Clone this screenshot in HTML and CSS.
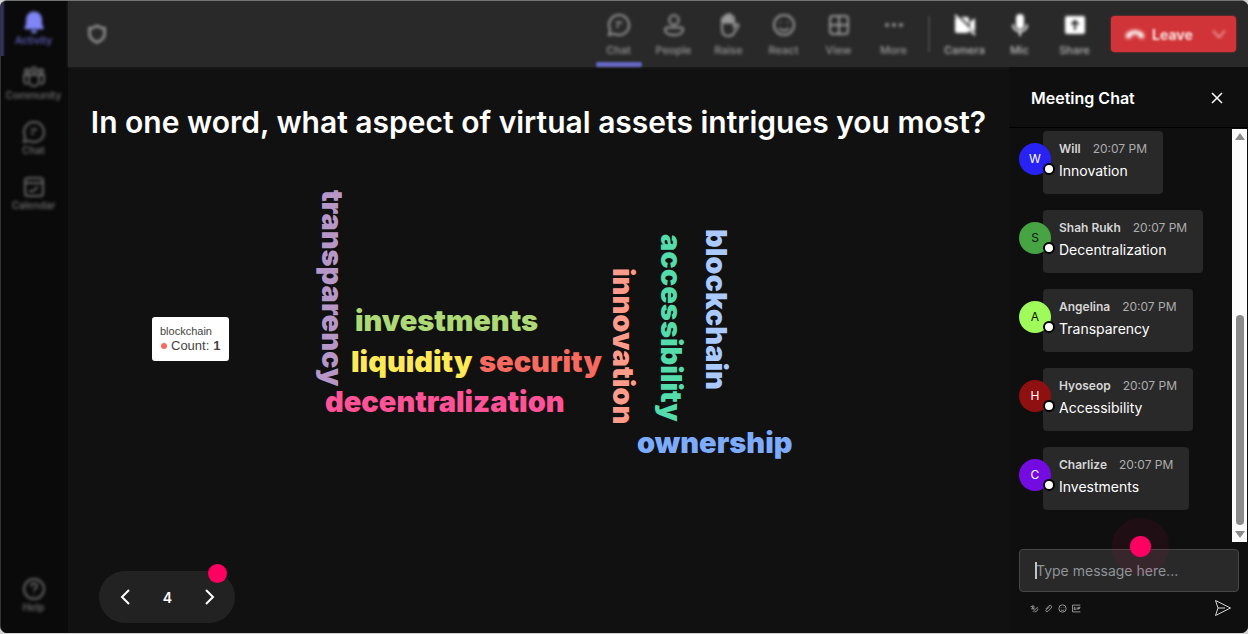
FILE: index.html
```html
<!DOCTYPE html>
<html lang="en">
<head>
<meta charset="utf-8">
<title>Meeting</title>
<link rel="stylesheet" href="styles.css">
</head>
<body>
<div class="app">
  <nav class="rail" aria-label="Main">
    <button class="rail-item active"><svg viewBox="0 0 24 24"><path class="solid" d="M12 1.500a8 8 0 0 0-8 8v4.500l-1.600 4A1 1 0 0 0 3.400 19.300h17.200a1 1 0 0 0 1-1.300L20 14V9.500a8 8 0 0 0-8-8zM9 20.500a3 3 0 0 0 6 0z"/></svg><span>Activity</span></button>
    <button class="rail-item"><svg viewBox="0 0 24 24"><circle cx="5" cy="6" r="2"/><circle cx="12" cy="5" r="2.500"/><circle cx="19" cy="6" r="2"/><path d="M7 10h10v6a5 5 0 0 1-10 0zM7 10H2v5c0 3 2 4 4 4M17 10h5v5c0 3-2 4-4 4"/></svg><span>Community</span></button>
    <button class="rail-item"><svg viewBox="0 0 24 24"><path d="M12 2a10 10 0 1 1-4.700 18.800L2 22l1.200-5.300A10 10 0 0 1 12 2zM9 9.500h6M9 13.500h3"/></svg><span>Chat</span></button>
    <button class="rail-item"><svg viewBox="0 0 24 24"><rect x="3" y="3" width="18" height="18" rx="3"/><path d="M3 8h18M7 16h4l5-4"/></svg><span>Calendar</span></button>
    <button class="rail-item help"><svg viewBox="0 0 24 24"><circle cx="12" cy="12" r="10"/><path d="M9 9.500c0-4 6-4 6-.5 0 2.500-3 2.500-3 5M12 17v1"/></svg><span>Help</span></button>
  </nav>

  <div class="workspace">
    <header class="topbar">
      <svg class="shield" viewBox="0 0 24 24"><path d="M12 2c3 2 5 3 9 3v7c0 5-4 8-9 10-5-2-9-5-9-10V5c4 0 6-1 9-3z"/></svg>
      <div class="tools">
        <button class="tool current"><svg viewBox="0 0 24 24"><path d="M12 2a10 10 0 1 1-4.700 18.800L2 22l1.200-5.300A10 10 0 0 1 12 2zM9 9.500h6M9 13.500h3"/></svg><span>Chat</span></button>
        <button class="tool"><svg viewBox="0 0 24 24"><circle cx="12" cy="7" r="4.700"/><path d="M5 14.500h14a2 2 0 0 1 2 2c0 3.500-4 5.500-9 5.500s-9-2-9-5.500a2 2 0 0 1 2-2z"/></svg><span>People</span></button>
        <button class="tool"><svg viewBox="0 0 24 24"><path d="M5 12V6a1.500 1.500 0 0 1 3 0v5V3.500a1.500 1.500 0 0 1 3 0V11 2.500a1.500 1.500 0 0 1 3 0V11 5a1.500 1.500 0 0 1 3 0v9l2-2.500c1-1.200 3 0 2.400 1.500L17 20c-1 2-3 3-5.500 3C7 23 5 20 5 16z"/><path class="solid" d="M5 6h12v4H5zM8 2h6v5H8z"/></svg><span>Raise</span></button>
        <button class="tool"><svg viewBox="0 0 24 24"><circle cx="12" cy="12" r="10"/><path d="M8.500 9v1M15.500 9v1M7 15c2.500 3.300 7.500 3.300 10 0"/></svg><span>React</span></button>
        <button class="tool"><svg viewBox="0 0 24 24"><rect x="3" y="3" width="18" height="18" rx="3"/><path d="M12 3v18M3 12h18"/></svg><span>View</span></button>
        <button class="tool"><svg viewBox="0 0 24 24"><circle class="solid" cx="5" cy="12" r="2"/><circle class="solid" cx="12" cy="12" r="2"/><circle class="solid" cx="19" cy="12" r="2"/></svg><span>More</span></button>
        <span class="divider"></span>
        <button class="tool bright"><svg viewBox="0 0 24 24"><path class="solid" d="M5 4l11 11v3a2 2 0 0 1-2 2H4a2 2 0 0 1-2-2V6zM8 4h6a2 2 0 0 1 2 2v6zM17 9l5-4v14l-5-4z"/><path d="M2 2l20 20"/></svg><span>Camera</span></button>
        <button class="tool bright"><svg viewBox="0 0 24 24"><rect class="solid" x="8" y="1" width="8" height="15" rx="4"/><path d="M5 11.500c0 9 14 9 14 0M12 18.500V23"/></svg><span>Mic</span></button>
        <button class="tool bright"><svg viewBox="0 0 24 24"><rect class="solid" x="2" y="3" width="20" height="18" rx="2"/><path class="cut" d="M12 17V8M8.500 11.500L12 8l3.500 3.500"/></svg><span>Share</span></button>
      </div>
      <div class="leave">
        <button class="leave-main"><svg viewBox="0 0 24 24"><path class="solid" d="M1 15c0-10 22-10 22 0 0 3-2 2.500-6 1.500-1-.3-1-1-1-3.500-3-1-5-1-8 0 0 2.500 0 3.200-1 3.500-4 1-6 1.500-6-1.500z"/></svg>Leave</button>
        <button class="leave-more" aria-label="Leave options"><svg viewBox="0 0 24 24"><path d="M3 7l9 10 9-10"/></svg></button>
      </div>
    </header>

    <div class="content">
      <main class="stage">
        <h1>In one word, what aspect of virtual assets intrigues you most?</h1>
        <div class="cloud">
          <span class="word down transparency">transparency</span>
          <span class="word investments">investments</span>
          <span class="word liquidity">liquidity</span>
          <span class="word security">security</span>
          <span class="word decentralization">decentralization</span>
          <span class="word down innovation">innovation</span>
          <span class="word down accessibility">accessibility</span>
          <span class="word down blockchain">blockchain</span>
          <span class="word ownership">ownership</span>
          <div class="tooltip"><div>blockchain</div><div class="count"><i></i>Count: <b>1</b></div></div>
        </div>
        <div class="pager">
          <button aria-label="Previous"><svg viewBox="0 0 12 18"><path d="M10 2L3 9l7 7"/></svg></button>
          <span>4</span>
          <button aria-label="Next"><svg viewBox="0 0 12 18"><path d="M2 2l7 7-7 7"/></svg></button>
          <i class="hotspot"></i>
        </div>
      </main>

      <aside class="chat">
        <div class="chat-head">
          <h2>Meeting Chat</h2>
          <button aria-label="Close"><svg viewBox="0 0 12 12"><path d="M1 1l10 10M11 1L1 11"/></svg></button>
        </div>
        <div class="chat-body">
          <ul class="messages">
            <li><span class="avatar will">W</span><div class="bubble"><p class="meta"><b>Will</b><time>20:07 PM</time></p><p>Innovation</p></div></li>
            <li><span class="avatar shah">S</span><div class="bubble"><p class="meta"><b>Shah Rukh</b><time>20:07 PM</time></p><p>Decentralization</p></div></li>
            <li><span class="avatar angelina">A</span><div class="bubble"><p class="meta"><b>Angelina</b><time>20:07 PM</time></p><p>Transparency</p></div></li>
            <li><span class="avatar hyoseop">H</span><div class="bubble"><p class="meta"><b>Hyoseop</b><time>20:07 PM</time></p><p>Accessibility</p></div></li>
            <li><span class="avatar charlize">C</span><div class="bubble"><p class="meta"><b>Charlize</b><time>20:07 PM</time></p><p>Investments</p></div></li>
          </ul>
          <div class="scrollbar" aria-hidden="true"><span class="up"></span><span class="track"></span><span class="thumb"></span><span class="dn"></span></div>
        </div>
        <form class="composer">
          <div class="field">
            <input type="text" aria-label="Message" placeholder="Type message here...">
            <i class="caret"></i>
            <i class="pulse"></i>
          </div>
          <div class="actions">
            <button type="button" aria-label="Format"><svg viewBox="0 0 16 16"><path d="M1 5l5-2-3 6 4-1M5 14l9-9M8 14c4 0 6-3 6-6M7 4v6"/></svg></button>
            <button type="button" aria-label="Attach"><svg viewBox="0 0 16 16"><path d="M3 9l6-6c3-2 6 1 4 4l-6 6c-3 2-5-1-3-3l6-5"/></svg></button>
            <button type="button" aria-label="Emoji"><svg viewBox="0 0 16 16"><circle cx="8" cy="8" r="6.500"/><path d="M5.500 6v1M10.500 6v1M5 10c1.500 2 4.500 2 6 0"/></svg></button>
            <button type="button" aria-label="GIF"><svg viewBox="0 0 16 16"><path d="M15 2H1v12h14M6 6H4v4h2V8M9 6v4M11 10V6h4M11 8h3"/></svg></button>
            <button type="button" class="send" aria-label="Send"><svg viewBox="0 0 18 18"><path d="M1.500 1.500L16.500 9l-15 7.500L4 9zM4 9h7"/></svg></button>
          </div>
        </form>
      </aside>
    </div>
  </div>
</div>
</body>
</html>
```
FILE: styles.css
```css
*, *::before, *::after { box-sizing: border-box; }
html, body { height: 100%; }
body {
  margin: 0;
  background: #d4d4d4;
  color: #fff;
  font-family: Inter, "Liberation Sans", sans-serif;
}
h1, h2, p, ul { margin: 0; padding: 0; }
ul { list-style: none; }
button { border: 0; padding: 0; background: none; color: inherit; font: inherit; }
svg { display: block; fill: none; stroke: currentColor; stroke-width: 2; }
.solid { fill: currentColor; stroke: none; }

.app {
  --soft: blur(1px) blur(1px);
  display: flex;
  height: calc(100vh - 1px);
  border-top: 1px solid #737373;
  border-left: 1px solid #333;
  border-radius: 7px;
  background: #111;
  overflow: hidden;
}

.rail {
  flex: 0 0 67px;
  display: flex;
  flex-direction: column;
  padding-bottom: 13px;
  background: #0a0a0a;
}
.rail-item {
  display: flex;
  flex-direction: column;
  align-items: center;
  height: 55px;
  padding: 9px 2px 0 0;
  color: #666;
  font-size: 10px;
  line-height: 12px;
  font-weight: 600;
}
.rail-item svg { width: 24px; height: 24px; }
.rail-item svg, .rail-item span { filter: var(--soft); }
.rail-item.active { color: #5a5ab0; box-shadow: inset 4px 0 2px -1px #333366; }
.rail-item.active svg { color: #7f85f5; }
.rail-item.help { margin-top: auto; height: 43px; padding-top: 0; }

.workspace { flex: 1; min-width: 0; display: flex; flex-direction: column; }
.topbar {
  flex: 0 0 66px;
  display: flex;
  align-items: center;
  padding: 0 12px 0 19px;
  background: #292929;
  box-shadow: 0 0 3px #292929;
}
.topbar svg, .topbar .tool span { filter: var(--soft); }
.shield { width: 20px; height: 20px; color: #999; stroke-width: 3; }
.tools { display: flex; align-self: stretch; margin-left: auto; }
.tool {
  position: relative;
  display: flex;
  flex-direction: column;
  align-items: center;
  gap: 6px;
  width: 55px;
  padding-top: 12px;
  color: #999;
  font-size: 11px;
  line-height: 14px;
  font-weight: 500;
}
.tool svg { width: 24px; height: 24px; }
.tool.bright { color: #bbb; }
.tool.bright svg { color: #fff; }
.tool .cut { stroke: #292929; }
.current::after {
  content: "";
  position: absolute;
  left: 5px;
  right: 4px;
  bottom: 0;
  height: 5px;
  border-radius: 2px;
  background: #6468c4;
  filter: blur(1px);
}
.divider { width: 2px; margin: 15px 7px; background: #444; filter: blur(1px); }
.leave {
  display: flex;
  align-items: center;
  height: 36px;
  margin-left: 9px;
  border-radius: 4px;
  background: #d13438;
  box-shadow: 0 0 2px #d13438;
}
.leave-main {
  display: flex;
  align-items: center;
  gap: 7px;
  width: 91px;
  padding-left: 14px;
  font-size: 14px;
  font-weight: 700;
  color: #fbe3e3;
  filter: blur(1px);
}
.leave-main svg { width: 20px; height: 20px; color: #fff; }
.leave-more { width: 34px; padding-left: 9px; color: #fbd0d1; }
.leave-more svg { width: 16px; height: 16px; }

.content { flex: 1; min-height: 0; display: flex; }
.stage { flex: 1; min-width: 0; display: flex; flex-direction: column; }
h1 {
  padding-top: 37px;
  text-align: center;
  font-size: 30px;
  line-height: 36px;
  font-weight: 600;
}
.cloud { position: relative; flex: 1; }
.word {
  position: absolute;
  font-family: "Arial Black", Inter, sans-serif;
  font-size: 29px;
  line-height: 34px;
  font-weight: 900;
  white-space: nowrap;
}
.down { writing-mode: vertical-rl; }
.transparency { left: 247px; top: 50px; color: #b797c7; }
.investments { left: 287px; top: 164px; color: #add976; }
.liquidity { left: 283px; top: 205px; color: #ffe957; }
.security { left: 411px; top: 205px; color: #f66a60; }
.decentralization { left: 257px; top: 245px; color: #ff5297; }
.innovation { left: 538px; top: 128px; color: #ff9b8a; }
.accessibility { left: 586px; top: 94px; color: #54dcab; }
.blockchain { left: 631px; top: 89px; color: #a9c9ff; }
.ownership { left: 569px; top: 286px; color: #7dacff; }
.tooltip {
  position: absolute;
  left: 84px;
  top: 177px;
  width: 77px;
  padding: 7px 8px;
  border-radius: 3px;
  background: #fff;
  color: #444;
  font-family: "Liberation Sans", Arial, sans-serif;
  font-size: 11px;
  line-height: 14px;
  white-space: nowrap;
}
.count { display: flex; align-items: center; gap: 4px; font-size: 13px; line-height: 16px; }
.count i { width: 6px; height: 6px; margin-left: 1px; border-radius: 50%; background: #f66a60; }
.pager {
  position: relative;
  display: flex;
  align-items: center;
  justify-content: space-between;
  align-self: flex-start;
  width: 136px;
  height: 52px;
  margin: 0 0 10px 31px;
  padding: 0 19px 0 20px;
  border-radius: 26px;
  background: #222;
  font-size: 14px;
  font-weight: 600;
}
.pager svg { width: 12px; height: 18px; }
.hotspot {
  position: absolute;
  top: -7px;
  right: 8px;
  width: 19px;
  height: 19px;
  border-radius: 50%;
  background: #ff0062;
}

.chat { flex: 0 0 239px; display: flex; flex-direction: column; background: #0f0f0f; }
.chat-head {
  display: flex;
  align-items: center;
  justify-content: space-between;
  height: 61px;
  padding: 2px 25px 0 22px;
  border-bottom: 1px solid #000;
}
h2 { font-size: 16px; line-height: 20px; font-weight: 600; }
.chat-head svg { width: 12px; height: 12px; stroke-width: 1.500; }
.chat-body { flex: 1; min-height: 0; display: flex; padding: 1px 1px 0 10px; }
.messages { flex: 1; min-width: 0; display: flex; flex-direction: column; gap: 16px; padding-top: 2px; }
.messages li { display: flex; align-items: flex-start; }
.avatar {
  position: relative;
  z-index: 1;
  width: 32px;
  height: 32px;
  margin: 12px -8px 0 0;
  border-radius: 50%;
  text-align: center;
  font-size: 12px;
  line-height: 32px;
}
.avatar::after {
  content: "";
  position: absolute;
  left: 24px;
  top: 20px;
  width: 12px;
  height: 12px;
  border: 2px solid #000;
  border-radius: 50%;
  background: #fff;
}
.will { background: #2922f4; }
.shah { background: #46a443; color: #111; }
.angelina { background: #9ffb5a; color: #111; }
.hyoseop { background: #8f1010; }
.charlize { background: #740be0; }
.bubble {
  height: 63px;
  padding: 9px 16px 0;
  border-radius: 4px;
  background: #292929;
  font-size: 14px;
  line-height: 22px;
}
.meta { display: flex; gap: 12px; font-size: 12px; line-height: 18px; margin-bottom: 2px; }
.meta b { font-weight: 600; color: #d6d6d6; }
.meta time { color: #adadad; }
.scrollbar {
  flex: 0 0 15px;
  display: flex;
  flex-direction: column;
  align-items: center;
  padding: 4px 0;
  background: #fcfcfc;
}
.up, .dn { border: 5px solid transparent; }
.up { border-top: 0; border-bottom: 7px solid #8b8b8b; }
.dn { margin-top: 6px; border-bottom: 0; border-top: 7px solid #8b8b8b; }
.track { flex: 174; }
.thumb { flex: 209; width: 8px; border-radius: 4px; background: #8b8b8b; }
.composer { padding: 7px 9px 16px 10px; }
.field { position: relative; }
.field input {
  display: block;
  width: 100%;
  height: 43px;
  padding: 0 16px;
  border: 1px solid #474747;
  border-radius: 4px;
  background: #292929;
  color: #fff;
  font: 14px Inter, sans-serif;
}
.field input::placeholder { color: #8f9499; opacity: 1; }
.caret { position: absolute; left: 16px; top: 13px; width: 2px; height: 17px; background: #c4c4c4; }
.pulse {
  position: absolute;
  left: 93px;
  top: -31px;
  width: 57px;
  height: 57px;
  border-radius: 50%;
  background: radial-gradient(circle, #ff0062 0 10px, rgba(255, 0, 98, 0.070) 11px);
}
.actions { display: flex; align-items: center; gap: 5px; padding: 7px 7px 0 11px; }
.actions svg { width: 9px; height: 9px; color: #aaa; stroke-width: 1.500; }
.actions .send { margin-left: auto; }
.actions .send svg { width: 18px; height: 18px; color: #d6d6d6; stroke-width: 1; }
```
